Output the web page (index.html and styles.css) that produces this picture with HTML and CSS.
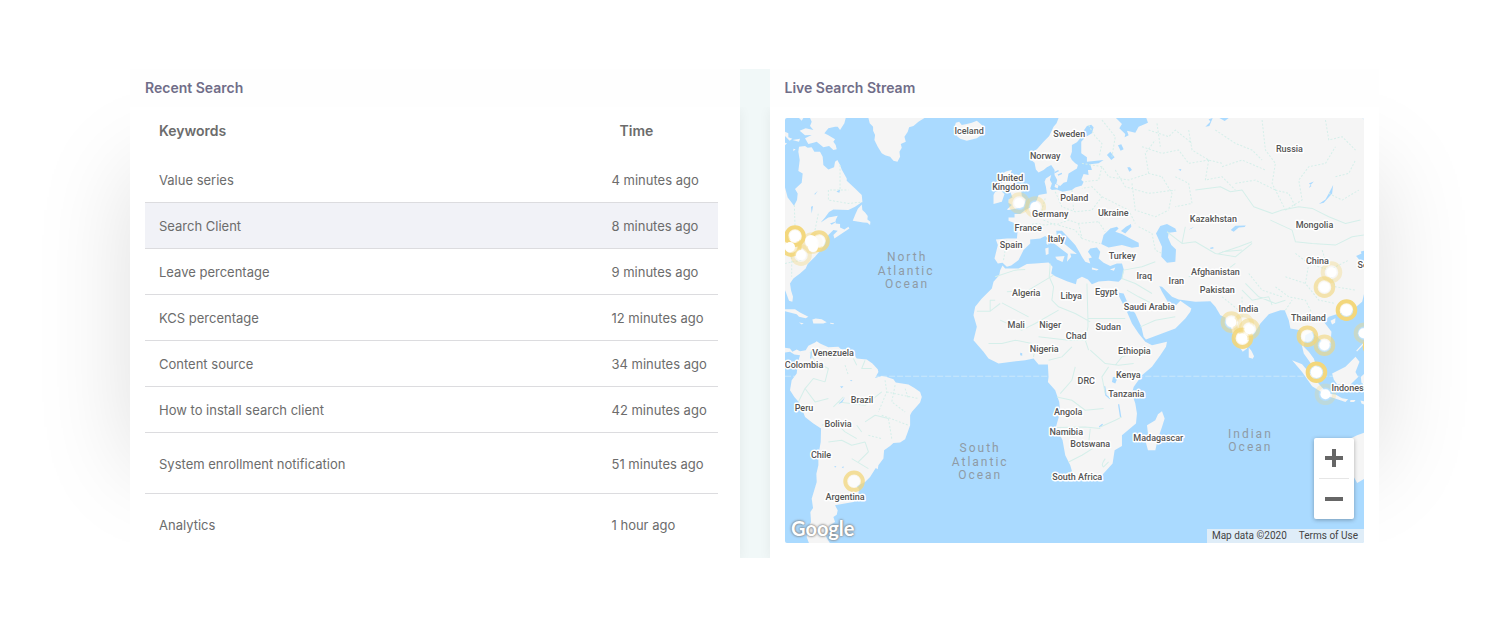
FILE: index.html
```html
<!DOCTYPE html>
<html lang="en">
<head>
<meta charset="utf-8">
<title>Search activity</title>
<link rel="stylesheet" href="styles.css">
</head>
<body>
<main class="dashboard">
  <section class="card">
    <h2 class="card-title">Recent Search</h2>
    <div class="card-body recent">
      <table class="searches">
        <thead><tr><th class="keyword" scope="col">Keywords</th><th class="time" scope="col">Time</th></tr></thead>
        <tbody>
          <tr><td>Value series</td><td>4 minutes ago</td></tr>
          <tr class="selected"><td>Search Client</td><td>8 minutes ago</td></tr>
          <tr><td>Leave percentage</td><td>9 minutes ago</td></tr>
          <tr><td>KCS percentage</td><td>12 minutes ago</td></tr>
          <tr><td>Content source</td><td>34 minutes ago</td></tr>
          <tr><td>How to install search client</td><td>42 minutes ago</td></tr>
          <tr class="tall"><td>System enrollment notification</td><td>51 minutes ago</td></tr>
          <tr class="tall"><td>Analytics</td><td>1 hour ago</td></tr>
        </tbody>
      </table>
    </div>
  </section>

  <section class="card">
    <h2 class="card-title">Live Search Stream</h2>
    <div class="card-body stream">
      <div class="map">
        <svg class="world" viewBox="0 0 579 425" role="img" aria-label="World map of live searches">
          <defs>
            <filter id="soft" x="-30%" y="-30%" width="160%" height="160%"><feGaussianBlur stdDeviation="0.7"/></filter>
            <g id="pin"><circle r="8.8" class="ring"/><circle r="5.8" class="dot" filter="url(#soft)"/></g>
          </defs>
          <path class="equator" d="M0 258H579"/>
          <g transform="scale(.33333)">
            <!-- North America, Greenland, Iceland -->
            <g class="land" transform="translate(0 -24)">
              <path d="M0 232L8 262 18 275 27 287 36 270 38 250 30 237 50 218 53 190 40 183 44 150 40 125 42 110 60 108 68 113 80 112 88 125 105 125 113 140 115 165 130 178 147 172 150 155 157 150 165 165 170 178 185 205 185 212 210 235 230 255 232 275 210 290 190 300 145 298 132 306 120 322 107 337 130 322 158 317 152 330 152 340 165 342 165 352 178 358 190 350 193 355 175 367 148 385 145 375 158 362 145 360 130 375 115 410 90 440 68 462 62 475 45 490 25 505 15 520 18 540 24 560 22 575 12 572 2 545 0 540Z"/>
              <path d="M44 62L62 55 85 60 75 48 80 35 75 24H182L178 40 165 60 158 50 150 50 130 55 118 70 130 76 150 88 145 95 152 105 155 118 145 120 132 108 115 112 95 95 85 98 70 102 60 85 80 75 60 76Z"/>
              <path d="M0 65L10 70 10 82 22 86 14 92 0 78ZM22 90L45 86 42 95ZM25 116L32 118 25 124ZM0 98L6 100 0 106ZM42 24L55 24 50 32Z"/>
              <path d="M250 24L254 40 264 50 264 62 270 75 268 90 278 110 290 130 300 136 315 140 325 152 337 155 345 140 343 125 350 113 347 102 362 95 358 80 368 65 372 52 385 48 400 35 418 24Z"/>
              <path d="M230 283L232 300 240 307 248 318 247 328 256 335 255 345 247 338 235 337 203 332 210 315 218 297Z"/>
              <path d="M0 597L30 597 45 607 70 620 62 624 42 620 35 612 0 603ZM82 628L92 625 110 627 125 636 115 640 85 640ZM135 638L147 639 145 642 136 641ZM42 637L56 639 50 643Z"/>
              <path d="M508 52L512 38 522 35 530 45 545 42 560 38 575 32 590 45 598 60 590 74 575 85 545 92 525 86 515 78 520 65 505 60Z"/>
            </g>
            <!-- Central and South America -->
            <g class="land" transform="translate(0 621)">
              <path d="M0 68L15 70 22 80 35 73 45 78 62 75 70 62 90 52 95 48 105 55 130 66 160 65 168 72 180 72 205 85 215 100 245 103 262 115 278 132 280 140 270 158 290 152 305 155 325 162 332 172 370 178 388 188 405 200 410 215 405 232 380 260 375 270 375 300 368 320 360 342 345 352 325 353 315 362 297 375 295 400 280 420 278 432 272 428 255 455 240 470 215 482 222 492 218 515 205 530 175 535 150 540 158 555 155 568 145 575 150 590 135 600 130 618 122 632 135 654H72L65 635 68 610 78 590 76 560 84 548 80 520 95 470 94 445 100 420 100 390 107 350 108 310 85 295 60 275 45 235 28 215 15 195 20 165 35 145 38 120 42 100 45 90 28 88 15 80 0 82Z"/>
            </g>
            <g transform="translate(570 -24)">
              <!-- Europe, Africa and Asia -->
              <path class="land" d="M250 24L244 40 235 50 222 78 205 95 185 118 165 130 168 150 178 158 182 178 190 187 205 180 215 172 228 165 238 180 238 195 246 210 243 222 255 228 265 218 275 215 280 190 305 175 308 165 300 160 290 150 285 140 290 125 290 105 305 97 315 85 325 62 335 48 348 44 355 52 350 70 330 82 318 95 318 130 335 142 335 155 385 150 370 160 345 163 350 180 338 180 340 195 325 192 318 210 325 215 320 226 300 232 290 240 262 245 245 238 230 240 225 235 230 220 224 210 228 195 212 205 208 215 212 230 215 250 190 255 185 270 170 290 150 300 135 312 118 312 118 322 100 322 100 332 115 338 128 355 125 385 95 385 62 388 68 405 58 445 68 460 82 458 95 470 108 466 130 450 145 420 165 400 165 388 195 385 210 378 230 395 260 418 278 432 275 455 288 440 285 430 305 432 290 420 270 403 245 378 243 362 260 362 275 378 300 405 312 425 320 440 330 455 345 460 340 445 350 442 338 425 345 415 365 412 375 425 370 445 385 458 405 468 425 460 440 460 446 480 440 505 430 515 400 512 370 514 350 522 338 508 320 500 305 508 302 522 275 513 240 498 228 490 232 470 220 457 180 460 155 462 130 475 90 475 82 466 75 480 72 495 55 515 50 535 20 565 0 590 -5 615 5 650 -5 690 25 725 40 745 70 760 110 755 150 750 175 745 190 763 218 763 220 800 218 815 240 840 252 875 255 905 242 950 262 990 270 1035 285 1065 295 1100 310 1107 350 1107 380 1095 412 1060 418 1020 440 1007 440 975 482 940 485 910 480 880 470 850 475 830 500 795 530 770 555 735 572 710 575 695 530 705 510 695 490 670 470 640 455 605 432 560 430 548 445 550 460 585 480 610 498 650 505 680 512 688 560 670 600 655 630 625 645 605 648 595 615 572 602 585 578 576 560 545 552 528 560 530 575 545 590 560 610 568 660 575 705 573 720 590 735 615 750 622 752 640 765 645 775 680 785 700 802 725 815 715 822 685 840 665 855 640 880 612 915 600 928 600 940 630 945 655 975 660 978 700 985 730 1010 765 1025 775 1015 745 1000 725 985 710 990 675 1010 665 1040 695 1065 700 1068 665 1045 635 1060 620 1090 610 1130 600 1160 575 1167 545V24Z"/>
              <!-- Islands -->
              <path class="land" d="M82 190L92 184 110 180 105 195 122 208 122 225 138 242 140 258 152 268 145 290 120 296 100 300 95 298 110 285 100 278 100 268 112 262 105 245 85 238 80 220ZM55 255L60 245 78 243 88 252 80 275 55 282ZM240 440L268 438 262 456 245 448ZM210 415L220 412 220 432 212 435ZM213 390L219 386 219 405 214 402ZM350 472L370 477 365 481 350 478ZM404 478L420 472 416 482ZM240 222L250 226 247 235 238 231Z"/>
              <path class="land" d="M515 945L540 930 548 912 560 903 568 925 560 950 548 985 540 1020 518 1020 510 990 518 970ZM820 712L828 722 836 738 832 746 820 742ZM950 750L980 762 1005 792 1045 838 1042 848 1010 828 980 785ZM1040 848L1080 853 1100 864 1118 867 1110 875 1070 862 1045 856ZM1070 790L1110 770 1140 740 1152 755 1140 785 1148 800 1122 826 1085 822 1075 808ZM1156 800L1167 790V822L1158 818ZM1125 985L1145 975 1167 967V1105L1145 1118 1135 1100 1125 1075ZM1065 632L1080 624 1079 638 1070 643ZM1142 722L1162 700 1167 700 1145 724ZM1125 869L1140 869 1136 875 1124 875ZM1155 871L1167 873V883L1158 880Z"/>
              <!-- Inland seas and lakes -->
              <path class="water" d="M378 402L385 375 405 355 425 350 430 355 420 365 440 372 465 385 490 398 491 410 470 413 440 405 400 412ZM437 363L452 350 467 342 468 350 450 370ZM542 370L555 348 575 342 600 355 604 365 580 368 578 382 588 405 602 418 600 455 575 458 558 440 560 410ZM422 24L440 42 432 55 450 72 448 82 460 76 455 62 480 68 490 50 518 38 513 24ZM395 135L405 125 418 142 408 150ZM428 106L438 103 445 118 436 122ZM456 172L464 172 470 180 462 185ZM1030 282L1050 268 1060 250 1073 225 1070 250 1045 278ZM766 360L780 347 811 346 808 351 790 352 775 365ZM1142 438L1158 430 1156 424 1167 422V452L1152 450ZM690 50L705 35 700 28 712 24 702 48ZM732 24H760L748 33ZM640 358L656 350 648 356ZM1000 220L1015 214 1006 224ZM1008 228L1000 234 1005 225ZM413 800L428 800 420 820 410 815ZM135 728L141 729 141 737 135 735ZM609 178L618 177 616 183Z"/>
              <path class="river" d="M388 828L392 855 404 865M430 882L436 920M382 942L372 950M238 188L250 182M248 195L260 190M705 415L714 413"/>
              <!-- Borders -->
              <path class="border solid" d="M80 578L160 620M160 540L235 495M225 460L222 500 235 530 230 570 250 590 300 610 345 635M335 520L338 625H450M338 625V650L330 690 340 720M160 540L95 545M5 603H45V570L60 570M45 603L75 580M60 500L120 480 150 478M75 630L140 660 180 640 250 600M40 700L80 700 120 690 170 700M190 680L280 690 335 690M175 740L180 710M220 750L260 740 290 710M345 720L390 760 430 765 475 760M300 770L290 810 255 850M245 860L290 870 330 900 385 895M390 850L380 800 400 770M245 952L330 950 375 955M345 955L340 1000M280 1055L320 1035 360 1010M375 950L420 930 440 920M445 480L500 470 540 455M445 480L440 505 480 520 530 550M455 540L490 560 530 580 560 600M495 650L540 630 600 620M420 765L440 740 500 720M390 1045Q375 1065 385 1070L400 1055M575 365L620 400 660 395 720 430 780 440 830 400M620 400L630 350M640 500L700 480 740 490 780 460M660 240L735 230 765 245 800 240 835 290 890 310 920 300M920 300L970 290 1010 295 1060 320 1110 340 1155 330M885 330L950 360 960 395 1010 400 1080 405 1130 380 1165 375M810 520L850 560 900 580 930 570M730 430L790 410 830 395M740 425L800 420M800 540L830 570 880 560 890 585"/>
              <path class="border" d="M205 330L240 345 280 330 310 340 370 335M240 245L260 290 300 305 350 300 380 260 350 230 320 235M210 265L200 300 180 320M128 355L180 340 210 345 240 340M290 240L295 300M310 340L320 385 350 395 375 400M250 345L300 360 320 385M95 390L85 450M380 260L420 280 460 300 480 340M370 335L390 365M340 45L360 80 380 100 372 140M380 30L420 80 410 140M320 160L380 170 400 200 460 210 520 190 560 200M420 180L450 230 520 250 600 240M470 220L480 300 540 320 580 300M500 110L560 130 610 120 640 160 700 150M520 60L580 80 600 60 650 100M545 40L555 110M600 200L640 220 650 280 600 290M640 60L650 120 700 150 740 160M700 150L690 210 740 200 780 240M720 60L780 100 830 120 860 150M860 30L870 120 900 160 890 220 930 300M740 170L800 150 870 180M780 220L840 210 900 240M930 300L980 270 970 210 1000 170 1050 160 1080 110M1050 30L1060 90 1100 80 1140 120M1080 200L1120 190 1140 150M1060 250L1100 270 1150 240M490 350L530 370 540 420 560 430M900 240L940 250 960 290M960 430L1000 460 1060 480 1080 530 1140 540M1000 460L990 520 1030 570 1080 580M1040 420L1060 480 1120 450M930 500L990 520M900 530L940 560 990 570 1010 610M820 490L860 540 920 560M740 560L790 600 850 610M800 560L800 620M930 600L950 570M380 170L370 210 330 215M520 190L510 130 540 90M560 200L590 250 580 300"/>
            </g>
            <g transform="translate(0 621)">
              <path class="border solid" d="M75 80L90 110 130 130 120 170M205 100L215 120M240 105L230 130 260 130M120 170L85 160 60 190 90 230 130 220M60 190L40 230M110 300L150 290 180 320 215 340M130 350L170 345 200 360 240 350M240 350L250 380 220 410M200 400L250 430M145 245L175 215M160 230L240 240 290 200M240 290L270 270 310 280M215 300L230 320"/>
              <path class="border" d="M300 165L305 200 280 260M330 180L320 230 360 260M360 190L370 220M305 200L400 220M290 270L370 300M310 280L320 340M250 330L290 340M180 120L190 150"/>
              <path class="water" d="M160 238L180 215 172 230ZM165 183H175L170 189ZM194 165L202 164 199 168ZM148 422L154 423 150 427ZM170 425L177 424 174 429Z"/>
              <path class="river" d="M80 75L77 100"/>
            </g>
            <g transform="translate(0 -24)">
              <path class="border" d="M165 165L165 240 130 240 130 270 190 280 232 276M28 285L30 350M0 460L50 450M20 430V500M90 360L100 310M145 240L190 240"/>
              <path class="water" d="M154 245L165 238 163 248ZM78 290L84 288 80 310ZM88 252L98 243 90 254ZM135 340L158 332 140 344Z"/>
            </g>
          </g>
          <g class="pins">
            <use href="#pin" x="6" y="128" opacity=".9"/><use href="#pin" x="27" y="125" opacity=".4"/><use href="#pin" x="34" y="123" opacity=".8"/><use href="#pin" x="16" y="137" opacity=".35"/><use href="#pin" x="10" y="118"/>
            <use href="#pin" x="234" y="85" opacity=".35"/><use href="#pin" x="250" y="89" opacity=".35"/>
            <use href="#pin" x="546" y="154" opacity=".35"/><use href="#pin" x="539" y="169" opacity=".6"/><use href="#pin" x="561" y="192"/>
            <use href="#pin" x="446" y="204" opacity=".5"/><use href="#pin" x="458" y="206" opacity=".35"/><use href="#pin" x="457" y="220" opacity=".9"/><use href="#pin" x="464" y="211" opacity=".5"/>
            <use href="#pin" x="522" y="218" opacity=".8"/><use href="#pin" x="539" y="227" opacity=".6"/><use href="#pin" x="531" y="254"/><use href="#pin" x="540" y="276" opacity=".25"/>
            <use href="#pin" x="588" y="228"/><use href="#pin" x="579" y="215" opacity=".4"/><use href="#pin" x="69" y="363" opacity=".75"/>
          </g>
          <g class="dots" filter="url(#soft)"><circle cx="10" cy="118" r="5"/><circle cx="5" cy="129" r="5"/><circle cx="26" cy="123" r="6"/><circle cx="28" cy="129" r="5"/><circle cx="16" cy="137" r="5"/><circle cx="234" cy="85" r="5"/><circle cx="250" cy="89" r="5"/><circle cx="546" cy="154" r="5"/><circle cx="539" cy="169" r="5"/><circle cx="446" cy="204" r="5"/><circle cx="464" cy="211" r="5"/><circle cx="457" cy="220" r="5"/><circle cx="539" cy="227" r="5"/><circle cx="540" cy="276" r="5"/><circle cx="578" cy="215" r="5"/></g>
          <g class="countries">
            <text x="184" y="16">Iceland</text><text x="284" y="19">Sweden</text><text x="260" y="41">Norway</text><text x="225" y="63">United</text><text x="225" y="72">Kingdom</text><text x="289" y="83">Poland</text><text x="265" y="99">Germany</text><text x="328" y="98">Ukraine</text><text x="243" y="113">France</text><text x="271" y="124">Italy</text><text x="226" y="130">Spain</text><text x="337" y="141">Turkey</text><text x="359" y="161">Iraq</text><text x="391" y="166">Iran</text><text x="504" y="34">Russia</text><text x="428" y="104">Kazakhstan</text><text x="529" y="110">Mongolia</text><text x="532" y="146">China</text><text x="430" y="157">Afghanistan</text><text x="432" y="175">Pakistan</text><text x="463" y="194">India</text><text x="523" y="203">Thailand</text><text x="241" y="178">Algeria</text><text x="286" y="181">Libya</text><text x="321" y="177">Egypt</text><text x="364" y="192">Saudi Arabia</text><text x="231" y="210">Mali</text><text x="265" y="210">Niger</text><text x="323" y="212">Sudan</text><text x="291" y="221">Chad</text><text x="259" y="234">Nigeria</text><text x="349" y="236">Ethiopia</text><text x="301" y="266">DRC</text><text x="343" y="260">Kenya</text><text x="341" y="279">Tanzania</text><text x="283" y="297">Angola</text><text x="281" y="317">Namibia</text><text x="305" y="329">Botswana</text><text x="373" y="323">Madagascar</text><text x="292" y="362">South Africa</text><text x="48" y="238">Venezuela</text><text x="19" y="250">Colombia</text><text x="77" y="285">Brazil</text><text x="19" y="293">Peru</text><text x="53" y="309">Bolivia</text><text x="36" y="340">Chile</text><text x="60" y="382">Argentina</text>
            <text class="from-start" x="546" y="273">Indonesia</text><text class="from-start" x="572" y="150">Seoul</text>
          </g>
          <g class="oceans">
            <text x="122" y="143">North</text><text x="121" y="157">Atlantic</text><text x="122" y="170">Ocean</text>
            <text x="195" y="334">South</text><text x="195" y="348">Atlantic</text><text x="195" y="361">Ocean</text>
            <text x="465" y="320">Indian</text><text x="465" y="333">Ocean</text>
          </g>
          <text class="brand" x="6" y="418">Google</text>
        </svg>
        <div class="zoom">
          <button type="button" aria-label="Zoom in"><svg viewBox="0 0 18 18"><path d="M7 0h4v7h7v4h-7v7H7v-7H0V7h7z"/></svg></button>
          <button type="button" aria-label="Zoom out"><svg viewBox="0 0 18 18"><path d="M0 7h18v4H0z"/></svg></button>
        </div>
        <div class="attribution"><span>Map data ©2020</span><a href="#terms">Terms of Use</a></div>
      </div>
    </div>
  </section>
</main>
</body>
</html>
```

FILE: styles.css
```css
* { box-sizing: border-box; }

body {
  margin: 0;
  background: #fff;
  color: #6c6c6c;
  font-family: Inter, "Open Sans", sans-serif;
  font-size: 13px;
}

.dashboard {
  position: relative;
  display: grid;
  grid-template-columns: 1fr 1fr;
  gap: 30px;
  margin: 69px 124px 0 130px;
  background: #f1f8f8;
}

/* Soft shade that fades out toward the corners */
.dashboard::before {
  content: "";
  position: absolute;
  z-index: -1;
  inset: 120px 20px 110px;
  box-shadow: 0 0 90px 20px rgba(0, 0, 0, 0.13);
}

.card {
  display: flex;
  flex-direction: column;
}

.card-title {
  margin: 0;
  padding: 0 15px;
  background: #fefefe;
  color: #706d88;
  font-size: 14px;
  font-weight: 600;
  line-height: 38px;
}

/* The card shadow shows only in the gutter between the cards */
.card-body {
  flex: 1;
  background: #fff;
  box-shadow: 0 2px 12px rgba(0, 0, 0, 0.06);
}

.recent {
  padding: 0 22px 0 15px;
  clip-path: inset(0 -15px 0 0);
}

.stream {
  padding: 11px 15px 15px;
  clip-path: inset(0 0 0 -15px);
}

.searches {
  width: 100%;
  border-collapse: collapse;
  table-layout: fixed;
}

.searches th {
  height: 49px;
  padding: 0 14px 2px;
  font-size: 14px;
  font-weight: 600;
  text-align: left;
}

.searches .time {
  width: 106px;
  padding: 0 8px 2px;
}

.searches td {
  height: 46px;
  padding: 2px 14px 0;
  border-bottom: 1px solid #dcdcdf;
}

.searches td + td { padding: 2px 0 0; white-space: nowrap; }
.searches .tall td { height: 61px; }
.searches tr:last-child td { border-bottom: 0; }
.searches .selected td { background: #f1f2f7; }

.map {
  position: relative;
  overflow: hidden;
  border-radius: 2px;
  background: #aadaff;
  font-family: Roboto, sans-serif;
}

.world { display: block; width: 100%; }
.land { fill: #f5f5f5; }
.water { fill: #aadaff; }
.river { fill: none; stroke: #aadaff; stroke-width: 4px; }
.border { fill: none; stroke: #d5efea; stroke-width: 3px; stroke-dasharray: 6 5; stroke-linejoin: round; }
.border.solid { stroke-dasharray: none; }
.equator { stroke: #c9e7fc; stroke-width: 1px; stroke-dasharray: 6 2; }
.ring { fill: #fff8e0; fill-opacity: 0.5; stroke: #f3d77c; stroke-width: 4px; }
.dot, .dots { fill: #fff; }

.countries {
  fill: #555;
  stroke: #fff;
  stroke-width: 3px;
  stroke-linejoin: round;
  paint-order: stroke;
  font-size: 9px;
  font-weight: 500;
  text-anchor: middle;
}

.countries .from-start { text-anchor: start; }

.oceans {
  fill: #8f9aa5;
  font-size: 12px;
  letter-spacing: 2px;
  text-anchor: middle;
}

.brand {
  fill: #fff;
  font-family: Lato, sans-serif;
  font-size: 20px;
  font-weight: 700;
  text-shadow: 0 0 2px #777, 0 0 3px #888;
}

.zoom {
  position: absolute;
  right: 10px;
  bottom: 24px;
  width: 40px;
  border-radius: 2px;
  background: #fff;
  box-shadow: 0 1px 4px rgba(0, 0, 0, 0.3);
}

.zoom button {
  display: grid;
  place-items: center;
  width: 100%;
  height: 40px;
  padding: 0;
  border: 0;
  background: none;
}

.zoom button + button::before {
  content: "";
  width: 30px;
  height: 1px;
  background: #e6e6e6;
}

.zoom button + button { grid-template-rows: 1px 1fr; height: 41px; }
.zoom svg { width: 18px; fill: #666; }

.attribution {
  position: absolute;
  right: 0;
  bottom: 0;
  display: flex;
  gap: 12px;
  padding: 0 6px 0 5px;
  background: rgba(245, 245, 245, 0.7);
  color: #444;
  font-size: 10px;
  line-height: 14px;
}

.attribution a { color: #444; text-decoration: none; }
```
